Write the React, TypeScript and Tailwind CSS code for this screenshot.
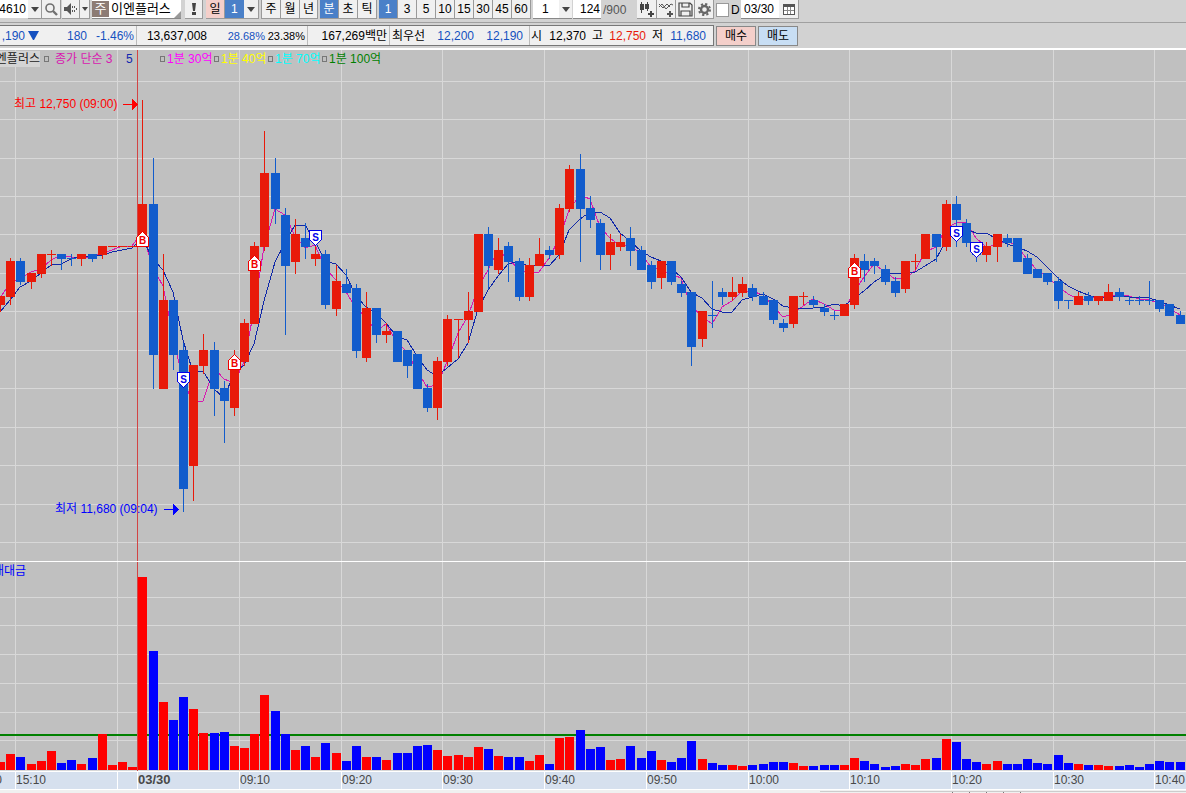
import type { ReactNode } from 'react'

type Color = 'R' | 'B'
// color, high, body top, body bottom, low, volume top
type Candle = [Color, number, number, number, number, number]

const FIRST = -14
const STEP = 10.1685
const UP = '#e81a0a'
const DOWN = '#125ccc'

const candles: Candle[] = [
  ['R', 296, 296, 305, 312, 762], ['R', 258, 261, 297, 305, 754], ['B', 258, 261, 282, 285, 757],
  ['R', 273, 273, 282, 289, 764], ['R', 254, 254, 274, 278, 761], ['R', 250, 254, 255, 266, 751],
  ['B', 254, 254, 259, 270, 763], ['B', 254, 258, 259, 266, 760], ['R', 254, 254, 259, 266, 764],
  ['B', 254, 254, 259, 262, 758], ['R', 246, 246, 255, 259, 734], ['R', 246, 246, 247, 247, 765],
  ['R', 246, 246, 247, 247, 762], ['R', 246, 246, 247, 247, 767], ['R', 100, 204, 246, 246, 577],
  ['B', 158, 204, 355, 389, 651], ['R', 254, 300, 389, 389, 702], ['B', 300, 300, 355, 370, 720],
  ['B', 343, 350, 489, 512, 697], ['R', 365, 365, 466, 501, 709], ['R', 334, 350, 366, 374, 733],
  ['B', 342, 350, 389, 416, 733], ['B', 381, 388, 401, 443, 732], ['R', 350, 362, 408, 416, 746],
  ['R', 319, 323, 362, 366, 748], ['R', 242, 246, 324, 324, 734], ['R', 131, 173, 247, 251, 695],
  ['B', 158, 173, 209, 224, 711], ['B', 208, 215, 266, 335, 734], ['R', 219, 234, 262, 274, 750],
  ['B', 223, 238, 247, 259, 746], ['R', 246, 254, 259, 266, 757], ['B', 250, 254, 305, 309, 743],
  ['R', 265, 281, 309, 316, 753], ['B', 269, 284, 293, 293, 761], ['B', 284, 288, 351, 358, 746],
  ['R', 292, 308, 358, 362, 757], ['B', 308, 308, 335, 343, 757], ['R', 323, 331, 335, 343, 760],
  ['B', 331, 331, 362, 362, 753], ['B', 350, 350, 366, 378, 753], ['B', 354, 354, 389, 389, 746],
  ['B', 384, 388, 408, 412, 745], ['R', 357, 361, 408, 420, 750], ['R', 315, 319, 362, 366, 756],
  ['R', 319, 319, 320, 358, 755], ['R', 292, 311, 320, 343, 757], ['R', 234, 234, 312, 312, 747],
  ['B', 227, 234, 266, 289, 749], ['R', 238, 250, 270, 274, 756], ['B', 242, 246, 262, 282, 757],
  ['B', 258, 261, 297, 301, 757], ['R', 258, 265, 297, 301, 761], ['R', 238, 254, 266, 266, 755],
  ['B', 246, 250, 255, 259, 764], ['R', 204, 208, 255, 259, 738], ['R', 165, 169, 209, 212, 737],
  ['B', 154, 169, 209, 262, 730], ['B', 196, 208, 220, 228, 749], ['B', 219, 223, 255, 270, 747],
  ['R', 234, 242, 255, 270, 760], ['R', 234, 242, 247, 251, 759], ['B', 227, 238, 251, 266, 746],
  ['B', 246, 250, 270, 270, 758], ['B', 261, 265, 282, 289, 751], ['R', 261, 261, 278, 289, 760],
  ['B', 261, 261, 282, 285, 762], ['B', 281, 284, 293, 297, 758], ['B', 292, 292, 347, 366, 741],
  ['R', 311, 311, 339, 347, 759], ['B', 281, 315, 316, 328, 763], ['B', 288, 292, 297, 305, 765],
  ['R', 277, 292, 297, 301, 765], ['R', 277, 284, 293, 297, 766], ['B', 284, 288, 297, 301, 765],
  ['B', 292, 296, 305, 305, 764], ['B', 300, 300, 320, 324, 762], ['B', 319, 323, 328, 332, 762],
  ['R', 296, 296, 324, 328, 763], ['R', 292, 296, 297, 305, 766], ['B', 296, 300, 305, 308, 766],
  ['B', 304, 308, 312, 316, 765], ['B', 311, 315, 316, 320, 765], ['R', 304, 304, 316, 316, 765],
  ['R', 254, 258, 305, 309, 758], ['B', 254, 261, 270, 282, 761], ['B', 258, 261, 266, 274, 764],
  ['B', 265, 269, 282, 285, 767], ['B', 277, 281, 293, 297, 766], ['R', 261, 261, 289, 293, 764],
  ['R', 254, 261, 262, 270, 765], ['R', 234, 234, 259, 259, 759], ['B', 234, 234, 247, 262, 758],
  ['R', 200, 204, 247, 251, 739], ['B', 196, 204, 220, 247, 742], ['B', 219, 223, 243, 247, 759],
  ['B', 243, 246, 255, 262, 762], ['R', 242, 246, 255, 262, 764], ['R', 234, 234, 247, 262, 761],
  ['B', 234, 238, 243, 247, 764], ['B', 238, 238, 262, 262, 764], ['B', 254, 258, 274, 274, 759],
  ['B', 269, 269, 278, 278, 763], ['B', 273, 273, 282, 285, 764], ['B', 277, 281, 301, 309, 755],
  ['B', 300, 300, 301, 309, 763], ['R', 292, 296, 305, 305, 764], ['B', 292, 296, 301, 305, 765],
  ['R', 296, 296, 301, 305, 765], ['R', 284, 292, 301, 301, 766], ['B', 288, 292, 297, 301, 766],
  ['B', 296, 300, 301, 305, 765], ['B', 296, 300, 301, 305, 767], ['B', 281, 300, 301, 305, 764],
  ['B', 300, 300, 309, 312, 761], ['B', 304, 304, 316, 316, 762], ['B', 311, 315, 324, 324, 762],
]

const vGrid = [15, 117, 239, 341, 442, 544, 646, 748, 849, 951, 1053, 1154]
const priceGrid = [81, 119, 158, 196, 234, 273, 311, 350, 388, 427, 465, 504, 542]
const volumeGrid = [597, 625, 654, 683, 712, 740]
const timeLabels: [number, string][] = [
  [15, '15:10'], [239, '09:10'], [341, '09:20'], [442, '09:30'], [544, '09:40'], [646, '09:50'],
  [748, '10:00'], [849, '10:10'], [951, '10:20'], [1053, '10:30'], [1154, '10:40'],
]
const buys = [[0, 231], [9, 354], [11, 255], [70, 262]]
const sells = [[4, 372], [17, 230], [80, 226], [82, 242]]

const left = (i: number) => Math.floor(138.86 + STEP * i)

// closes of the bars just off the left edge, then the visible ones
const closes = [321, 346, 304, 293, ...candles.map((c) => (c[0] === 'R' ? c[2] : c[3] - 1))]

function average(period: number) {
  return candles
    .map((_, n) => {
      const part = closes.slice(n + 5 - period, n + 5)
      const y = part.reduce((a, b) => a + b, 0) / period
      return `${left(n + FIRST) + 4},${Math.round(y)}`
    })
    .join(' ')
}

function Arrow() {
  return (
    <svg width="8" height="5" viewBox="0 0 8 5" className="fill-[#444]">
      <path d="M0 0h8L4 5z" />
    </svg>
  )
}

interface ToolProps {
  children: ReactNode
  label?: string
  className?: string
}

function Tool({ children, label, className = 'w-[19px] bg-[#f0f0f0]' }: ToolProps) {
  return (
    <button
      type="button"
      aria-label={label}
      className={`flex h-[19px] shrink-0 items-center justify-center border-r border-b border-[#9a9a9a] ${className}`}
    >
      {children}
    </button>
  )
}

function Toolbar() {
  return (
    <div className="flex h-[23px] items-start overflow-hidden border-b border-[#a0a0a0]">
      <input
        aria-label="종목코드"
        defaultValue="74610"
        className="-ml-2 h-[18px] w-9 shrink-0 bg-white pr-[2px] text-right"
      />
      <Tool label="종목 목록" className="w-[14px] bg-[#f0f0f0]"><Arrow /></Tool>
      <Tool label="검색">
        <svg width="13" height="13" viewBox="0 0 13 13" fill="none" stroke="#707070">
          <circle cx="5" cy="5" r="4" strokeWidth="1.6" />
          <path d="M8 8l4 4" strokeWidth="2.4" />
        </svg>
      </Tool>
      <Tool label="소리" className="ml-px w-[18px] bg-[#f0f0f0]">
        <svg width="13" height="12" viewBox="0 0 13 12" fill="#555">
          <path d="M0 4h3l4-4v12L3 8H0zM8 3h1v2H8zM10 3h1v2h-1zM8 7h1v2H8zM10 7h1v2h-1zM12 5h1v2h-1z" />
        </svg>
      </Tool>
      <Tool label="소리 설정" className="w-[10px] bg-[#f0f0f0]">
        <svg width="6" height="4" viewBox="0 0 6 4" fill="#444"><path d="M0 0h6L3 4z" /></svg>
      </Tool>
      <div className="ml-[2px] flex h-[19px] w-[89px] shrink-0 items-center border-b border-[#888] bg-white">
        <span className="flex h-4 w-[17px] items-center justify-center bg-[#8c7b74] text-[13px] text-white">주</span>
        <span className="flex-1 whitespace-nowrap pl-[2px] text-[13px]">이엔플러스</span>
        <svg width="7" height="7" viewBox="0 0 7 7" className="self-end" fill="#999"><path d="M7 0v7H0z" /></svg>
      </div>
      <Tool label="알림" className="ml-[4px] w-[18px] bg-[#f0f0f0]">
        <svg width="4" height="12" viewBox="0 0 4 12" fill="#444"><path d="M0 0h4L3 8H1zM0 9h4v3H0z" /></svg>
      </Tool>
      <Tool className="ml-[3px] w-[19px] bg-[#f4cfca]">일</Tool>
      <div className="relative h-[19px] w-[34px] shrink-0 border-b border-[#9a9a9a]">
        <select aria-label="일 주기" className="h-[18px] w-[19px] appearance-none bg-[#4a80c8] pl-[6px] text-white">
          <option>1</option>
        </select>
        <span className="pointer-events-none absolute top-0 right-0 flex h-[18px] w-[15px] items-center justify-center border-r border-[#9a9a9a] bg-[#f0f0f0]"><Arrow /></span>
      </div>
      <div className="ml-[2px] flex shrink-0 border-l border-[#9a9a9a]">
        <Tool>주</Tool>
        <Tool>월</Tool>
        <Tool className="w-[18px] bg-[#f0f0f0]">년</Tool>
      </div>
      <div className="ml-[2px] flex shrink-0">
        <Tool className="w-[19px] bg-[#4a80c8] text-white">분</Tool>
        <Tool>초</Tool>
        <Tool>틱</Tool>
      </div>
      <div className="ml-[2px] flex shrink-0">
        <Tool className="w-[19px] bg-[#4a80c8] text-white">1</Tool>
        {[3, 5, 10, 15, 30, 45, 60].map((n) => (
          <Tool key={n}>{n}</Tool>
        ))}
      </div>
      <div className="relative ml-[2px] h-[19px] w-[39px] shrink-0 border-b border-[#888]">
        <select aria-label="분 주기" className="h-[18px] w-[26px] appearance-none bg-white pl-[9px]">
          <option>1</option>
        </select>
        <span className="pointer-events-none absolute top-0 right-0 flex h-[18px] w-[13px] items-center justify-center bg-[#f0f0f0]"><Arrow /></span>
      </div>
      <label className="ml-[1px] flex h-[19px] w-[64px] shrink-0 items-center text-[#555]">
        <input aria-label="조회 개수" defaultValue="124" className="mr-[2px] h-[19px] w-[28px] border-b border-[#888] bg-white pr-px text-right text-black" />
        /900
      </label>
      <Tool label="차트 추가" className="w-5 bg-[#f0f0f0]">
        <svg width="16" height="15" viewBox="0 0 16 15" fill="#444" shapeRendering="crispEdges">
          <path d="M2 0h1v11H2zM1 2h4v6H1zM8 0h1v9H8zM6 2h4v5H6zM9 11h6v2H9zM11 9h2v6h-2z" />
        </svg>
      </Tool>
      <Tool label="지표 추가">
        <svg width="16" height="15" viewBox="0 0 16 15" fill="none" stroke="#555">
          <path d="M1 5l3-3 4 5 5-5 2 1M1 2l4 4 4-4 3 3" strokeWidth="1" />
          <path d="M9 12h6M12 9v6" strokeWidth="2" />
        </svg>
      </Tool>
      <Tool label="저장">
        <svg width="15" height="15" viewBox="0 0 15 15" fill="none" stroke="#444" strokeWidth="1.2">
          <path d="M1 1h11l2 2v11H1zM4 1v4h7V1M3 14V9h9v5" />
        </svg>
      </Tool>
      <Tool label="설정">
        <svg width="13" height="13" viewBox="0 0 13 13" fill="none" stroke="#666">
          <circle cx="6.5" cy="6.5" r="3.5" strokeWidth="2.4" />
          <circle cx="6.5" cy="6.5" r="5.5" strokeWidth="2" strokeDasharray="2.2 2.12" />
        </svg>
      </Tool>
      <label className="ml-[2px] flex h-[19px] shrink-0 items-center gap-[2px]">
        <input type="checkbox" className="h-[14px] w-[13px] appearance-none border border-[#999] bg-white" />
        <span className="w-[10px]">D</span>
      </label>
      <input aria-label="날짜" defaultValue="03/30" className="h-[19px] w-[38px] shrink-0 border-b border-[#888] bg-white pl-[3px]" />
      <Tool label="달력" className="w-5 bg-[#f0f0f0]">
        <svg width="12" height="11" viewBox="0 0 12 11" shapeRendering="crispEdges">
          <path d="M0 0h12v11H0z" fill="#555" />
          <path d="M1 3h10v7H1z" fill="#fff" />
          <path d="M4 3h1v7H4zM7 3h1v7H7zM1 6h10v1H1z" fill="#888" />
        </svg>
      </Tool>
    </div>
  )
}

function QuoteBar() {
  return (
    <div className="flex items-center gap-[2px] py-[2px] text-[#1450c0]">
      <div className="flex h-[21px] w-[714px] shrink-0 items-center border-y border-r border-[#777] bg-[#f0f0f0] whitespace-nowrap">
        <span className="flex w-[25px] justify-end">,190</span>
        <svg width="11" height="9" viewBox="0 0 11 9" className="ml-[3px] fill-[#1450c0]"><path d="M0 0h11L6 9H5z" /></svg>
        <span className="w-12 text-right">180</span>
        <span className="flex h-[19px] w-[50px] items-center justify-end border-r border-[#bbb] pr-[2px]">-1.46%</span>
        <span className="w-[70px] text-right text-black">13,637,008</span>
        <span className="w-[58px] text-right text-[11px]">28.68%</span>
        <span className="flex h-[19px] w-[43px] items-center justify-end border-r border-[#bbb] pr-[2px] text-[11px] text-black">23.38%</span>
        <span className="flex h-[19px] w-[82px] items-center justify-end border-r border-[#bbb] pr-[2px] text-black">167,269백만</span>
        <span className="w-[38px] pl-[2px] text-black">최우선</span>
        <span className="w-[46px] text-right">12,200</span>
        <span className="flex h-[19px] w-[56px] items-center justify-end border-r border-[#bbb] pr-[6px]">12,190</span>
        <span className="w-[14px] pl-[1px] text-black">시</span>
        <span className="w-[42px] text-right text-black">12,370</span>
        <span className="w-[17px] text-right text-black">고</span>
        <span className="w-[43px] text-right text-[#e81a0a]">12,750</span>
        <span className="w-[17px] text-right text-black">저</span>
        <span className="w-[43px] text-right">11,680</span>
      </div>
      <button type="button" className="h-[20px] w-10 shrink-0 border border-[#888] bg-[#f4cfca] text-black">매수</button>
      <button type="button" className="h-[20px] w-10 shrink-0 border border-[#888] bg-[#c8def4] text-black">매도</button>
    </div>
  )
}

function LegendItem({ children, className }: { children: ReactNode; className: string }) {
  return (
    <span className={`flex shrink-0 items-center gap-[2px] ${className}`}>
      <i className="h-[6px] w-[5px] border border-[#777]" />
      {children}
    </span>
  )
}

function Legend() {
  return (
    <div className="absolute top-px left-0 flex h-4 items-center whitespace-nowrap">
      <span className="flex w-10 justify-end overflow-hidden bg-[#d4d4d4] text-[#222]">엔플러스</span>
      <i className="ml-1 h-[6px] w-[5px] border border-[#777]" />
      <span className="w-[77px] pl-[6px] text-[#d818b0]">종가 단순 3</span>
      <span className="w-[34px] text-[#1028b0]">5</span>
      <LegendItem className="w-[54px] text-[#ff00ff]">1분 30억</LegendItem>
      <LegendItem className="w-[54px] text-[#ffff00]">1분 40억</LegendItem>
      <LegendItem className="w-[54px] text-[#00ffff]">1분 70억</LegendItem>
      <LegendItem className="text-[#008000]">1분 100억</LegendItem>
    </div>
  )
}

function Grid({ rows }: { rows: number[] }) {
  return (
    <g fill="#d8d8d8">
      {vGrid.map((x) => <rect key={x} x={x} y="0" width="1" height="800" />)}
      {rows.map((y) => <rect key={y} x="0" y={y} width="100%" height="1" />)}
    </g>
  )
}

function PriceChart() {
  return (
    <div className="relative">
      <svg className="block h-[511px] w-full" shapeRendering="crispEdges">
        <g transform="translate(0 -50)">
          <Grid rows={priceGrid} />
          <rect x="137" y="50" width="1" height="520" fill="#d24444" />
          <polyline points={average(3)} fill="none" stroke="#d818b0" />
          <polyline points={average(5)} fill="none" stroke="#1028a8" />
          {candles.map(([color, high, top, bottom, low], n) => {
            const x = left(n + FIRST)
            return (
              <g key={n} fill={color === 'R' ? UP : DOWN}>
                <rect x={x + 4} y={high} width="1" height={low - high} />
                <rect x={x} y={top} width="9" height={bottom - top} />
              </g>
            )
          })}
          <g fill="#ff0000">
            <text x="14" y="108">최고 12,750 (09:00)</text>
            <path d="M123 104h9v-5l6 5-6 6v-5h-9z" />
          </g>
          <g fill="#0000ff">
            <text x="55" y="513">최저 11,680 (09:04)</text>
            <path d="M164 509h9v-5l6 5-6 6v-5h-9z" />
          </g>
          {buys.map(([i, y]) => (
            <g key={i} transform={`translate(${left(i) + 4} ${y})`}>
              <path d="M.5 .5l6 6v9h-12v-9z" fill="#fff" stroke="#f00000" />
              <text x="0.5" y="13" textAnchor="middle" fontSize="10" fontWeight="bold" fill="#f00000">B</text>
            </g>
          ))}
          {sells.map(([i, y]) => (
            <g key={i} transform={`translate(${left(i) + 4} ${y})`}>
              <path d="M-5.5 .5h12v9l-6 6-6-6z" fill="#fff" stroke="#0000e8" />
              <text x="0.5" y="11" textAnchor="middle" fontSize="10" fontWeight="bold" fill="#0000e8">S</text>
            </g>
          ))}
        </g>
      </svg>
      <Legend />
    </div>
  )
}

function VolumeChart() {
  return (
    <svg className="block h-[210px] w-full border-t border-white" shapeRendering="crispEdges">
      <g transform="translate(0 -562)">
        <Grid rows={volumeGrid} />
        <rect x="0" y="734" width="100%" height="2" fill="#008000" />
        <rect x="0" y="770" width="100%" height="1" fill="#d8d8d8" />
        <rect x="137" y="560" width="1" height="211" fill="#d24444" />
        {candles.map(([color, , , , , top], n) => (
          <rect key={n} x={left(n + FIRST)} y={top} width="9" height={770 - top} fill={color === 'R' ? '#ff0000' : '#0000ff'} />
        ))}
        <text x="26" y="575" textAnchor="end" fill="#0000ff">래대금</text>
      </g>
    </svg>
  )
}

function TimeAxis() {
  return (
    <svg className="block h-[19px] w-full border-y border-white bg-[#d6e0ee]" fill="#484848" shapeRendering="crispEdges">
      {[...vGrid, 137].map((x) => <rect key={x} x={x} y="0" width="1" height="20" fill="#fff" />)}
      <text x="2" y="12" textAnchor="end">0</text>
      {timeLabels.map(([x, label]) => <text key={x} x={x + 1} y="12">{label}</text>)}
      <text x="138" y="12" fontSize="13" fontWeight="bold">03/30</text>
    </svg>
  )
}

export default function App() {
  return (
    <div className="min-h-screen overflow-hidden bg-[#f0f0f0] font-['Liberation_Sans','Noto_Sans_CJK_KR',sans-serif] text-[12px] leading-4 text-black">
      <header className="border-b-2 border-white bg-[#d2d2d2]">
        <Toolbar />
        <QuoteBar />
      </header>
      <main className="bg-[#c0c0c0]">
        <PriceChart />
        <VolumeChart />
        <TimeAxis />
      </main>
      <footer className="flex h-[3px] items-end">
        <div className="flex-1" />
        <div className="flex h-[2px] w-[366px] border-t border-[#ccc]">
          <i className="w-[133px] border-r border-[#777]" />
          <i className="w-[17px] border-r border-[#777]" />
          <i className="w-[17px] border-r border-[#777]" />
          <i className="w-[17px] border-r border-[#777]" />
          <i className="w-[17px] border-r border-[#777]" />
        </div>
      </footer>
    </div>
  )
}
